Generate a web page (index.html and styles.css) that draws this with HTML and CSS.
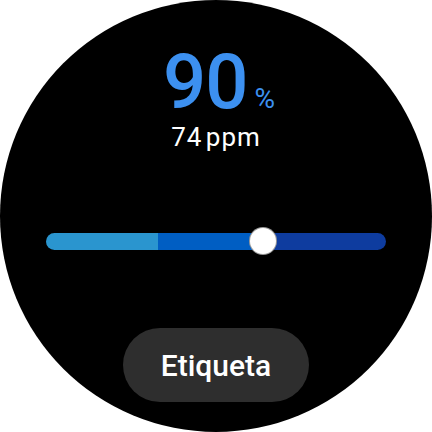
FILE: index.html
```html
<!DOCTYPE html>
<html lang="es">
<head>
<meta charset="utf-8">
<title>Watch</title>
<link rel="stylesheet" href="styles.css">
</head>
<body>
<div class="watch">
  <div class="reading">
    <span class="value">90</span>
    <span class="unit">%</span>
  </div>
  <div class="rate">74 ppm</div>
  <div class="slider">
    <div class="track">
      <div class="seg seg-low"></div>
      <div class="seg seg-mid"></div>
      <div class="seg seg-high"></div>
    </div>
    <div class="thumb" style="left: 204px"></div>
  </div>
  <button class="chip">Etiqueta</button>
</div>
</body>
</html>
```
FILE: styles.css
```css
html, body {
  margin: 0;
  padding: 0;
  background: #ffffff;
}
body {
  width: 432px;
  height: 432px;
  overflow: hidden;
  font-family: Roboto, "Noto Sans", sans-serif;
}
.watch {
  width: 432px;
  height: 432px;
  border-radius: 50%;
  background: #000000;
  display: flex;
  flex-direction: column;
  align-items: center;
  box-sizing: border-box;
  padding-top: 46px;
}
.reading {
  display: flex;
  align-items: baseline;
  gap: 7px;
  color: #3c90f0;
  height: 72px;
  line-height: 72px;
  padding-left: 6px;
}
.value {
  font-size: 76px;
  font-weight: 500;
  letter-spacing: -1px;
}
.unit {
  font-size: 28px;
  font-weight: 400;
}
.rate {
  margin-top: 6px;
  font-size: 26px;
  line-height: 26px;
  color: #ffffff;
  letter-spacing: 1px;
  word-spacing: -4px;
}
.slider {
  position: relative;
  width: 340px;
  height: 26px;
  margin-top: 78px;
  display: flex;
  align-items: center;
}
.track {
  width: 100%;
  height: 17px;
  border-radius: 9px;
  overflow: hidden;
  display: flex;
}
.seg { height: 100%; }
.seg-low { width: 112px; background: #2a95cf; }
.seg-mid { width: 105px; background: #005ec3; }
.seg-high { flex: 1; background: #0e3c9f; }
.thumb {
  position: absolute;
  top: 0;
  width: 26px;
  height: 26px;
  border-radius: 50%;
  background: #ffffff;
  box-shadow: 0 0 0 1px #9a9a9a;
  box-sizing: border-box;
}
.chip {
  margin-top: 74px;
  width: 186px;
  height: 74px;
  border: none;
  border-radius: 37px;
  background: #2e2e2e;
  color: #ffffff;
  font-family: Roboto, "Noto Sans", sans-serif;
  font-size: 30px;
  font-weight: 500;
  padding: 0;
}
```
